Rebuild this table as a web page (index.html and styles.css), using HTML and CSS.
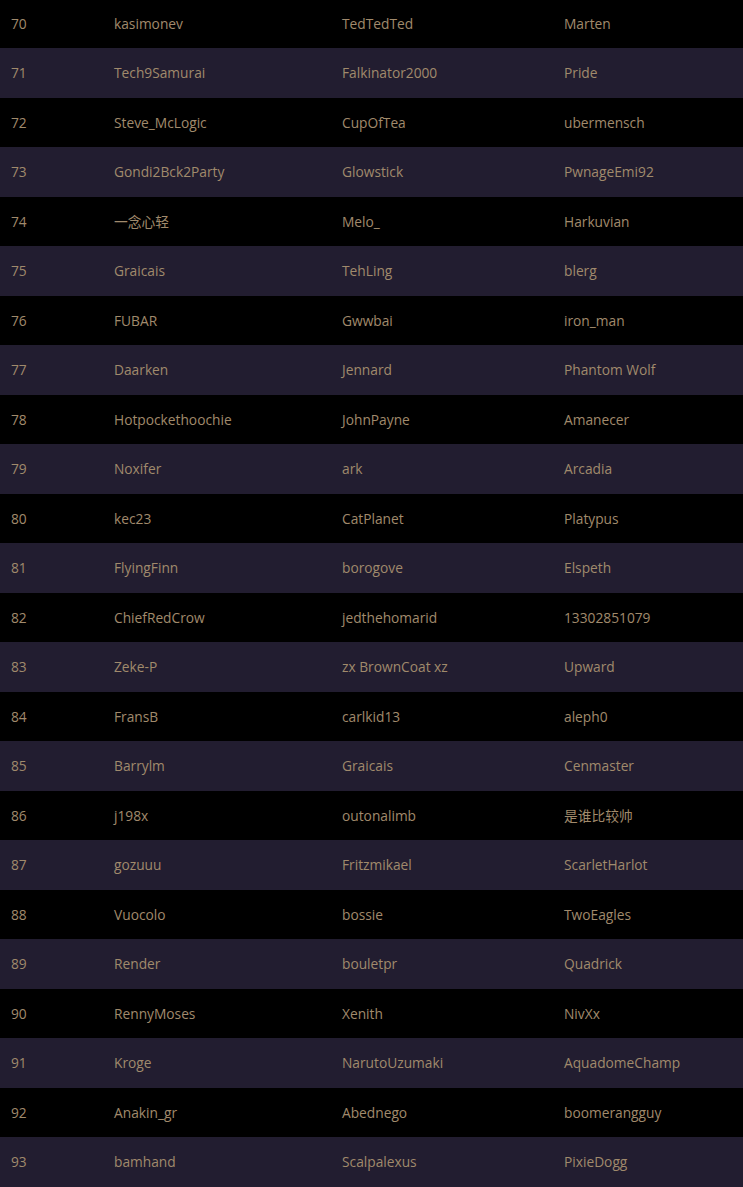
FILE: index.html
```html
<!DOCTYPE html>
<html>
<head>
<meta charset="utf-8">
<link rel="stylesheet" href="styles.css">
</head>
<body>
<div class="board">
<div class="row"><span>70</span><span>kasimonev</span><span>TedTedTed</span><span>Marten</span></div>
<div class="row"><span>71</span><span>Tech9Samurai</span><span>Falkinator2000</span><span>Pride</span></div>
<div class="row"><span>72</span><span>Steve_McLogic</span><span>CupOfTea</span><span>ubermensch</span></div>
<div class="row"><span>73</span><span>Gondi2Bck2Party</span><span>Glowstick</span><span>PwnageEmi92</span></div>
<div class="row"><span>74</span><span>一念心轻</span><span>Melo_</span><span>Harkuvian</span></div>
<div class="row"><span>75</span><span>Graicais</span><span>TehLing</span><span>blerg</span></div>
<div class="row"><span>76</span><span>FUBAR</span><span>Gwwbai</span><span>iron_man</span></div>
<div class="row"><span>77</span><span>Daarken</span><span>Jennard</span><span>Phantom Wolf</span></div>
<div class="row"><span>78</span><span>Hotpockethoochie</span><span>JohnPayne</span><span>Amanecer</span></div>
<div class="row"><span>79</span><span>Noxifer</span><span>ark</span><span>Arcadia</span></div>
<div class="row"><span>80</span><span>kec23</span><span>CatPlanet</span><span>Platypus</span></div>
<div class="row"><span>81</span><span>FlyingFinn</span><span>borogove</span><span>Elspeth</span></div>
<div class="row"><span>82</span><span>ChiefRedCrow</span><span>jedthehomarid</span><span>13302851079</span></div>
<div class="row"><span>83</span><span>Zeke-P</span><span>zx BrownCoat xz</span><span>Upward</span></div>
<div class="row"><span>84</span><span>FransB</span><span>carlkid13</span><span>aleph0</span></div>
<div class="row"><span>85</span><span>Barrylm</span><span>Graicais</span><span>Cenmaster</span></div>
<div class="row"><span>86</span><span>j198x</span><span>outonalimb</span><span>是谁比较帅</span></div>
<div class="row"><span>87</span><span>gozuuu</span><span>Fritzmikael</span><span>ScarletHarlot</span></div>
<div class="row"><span>88</span><span>Vuocolo</span><span>bossie</span><span>TwoEagles</span></div>
<div class="row"><span>89</span><span>Render</span><span>bouletpr</span><span>Quadrick</span></div>
<div class="row"><span>90</span><span>RennyMoses</span><span>Xenith</span><span>NivXx</span></div>
<div class="row"><span>91</span><span>Kroge</span><span>NarutoUzumaki</span><span>AquadomeChamp</span></div>
<div class="row"><span>92</span><span>Anakin_gr</span><span>Abednego</span><span>boomerangguy</span></div>
<div class="row"><span>93</span><span>bamhand</span><span>Scalpalexus</span><span>PixieDogg</span></div>
</div>
</body>
</html>
```

FILE: styles.css
```css
html, body {
  margin: 0;
  padding: 0;
  background: #000;
  overflow: hidden;
}
.board {
  margin-top: -1.5px;
  font-family: "Open Sans", "Noto Sans CJK SC", sans-serif;
  font-size: 13.75px;
  color: #a08a6c;
}
.row {
  display: grid;
  grid-template-columns: 103px 228px 222px 1fr;
  height: 49.5px;
  align-items: center;
  background: #000;
}
.row:nth-child(even) {
  background: #221d30;
}
.row span {
  padding-left: 11px;
  white-space: nowrap;
}
```
